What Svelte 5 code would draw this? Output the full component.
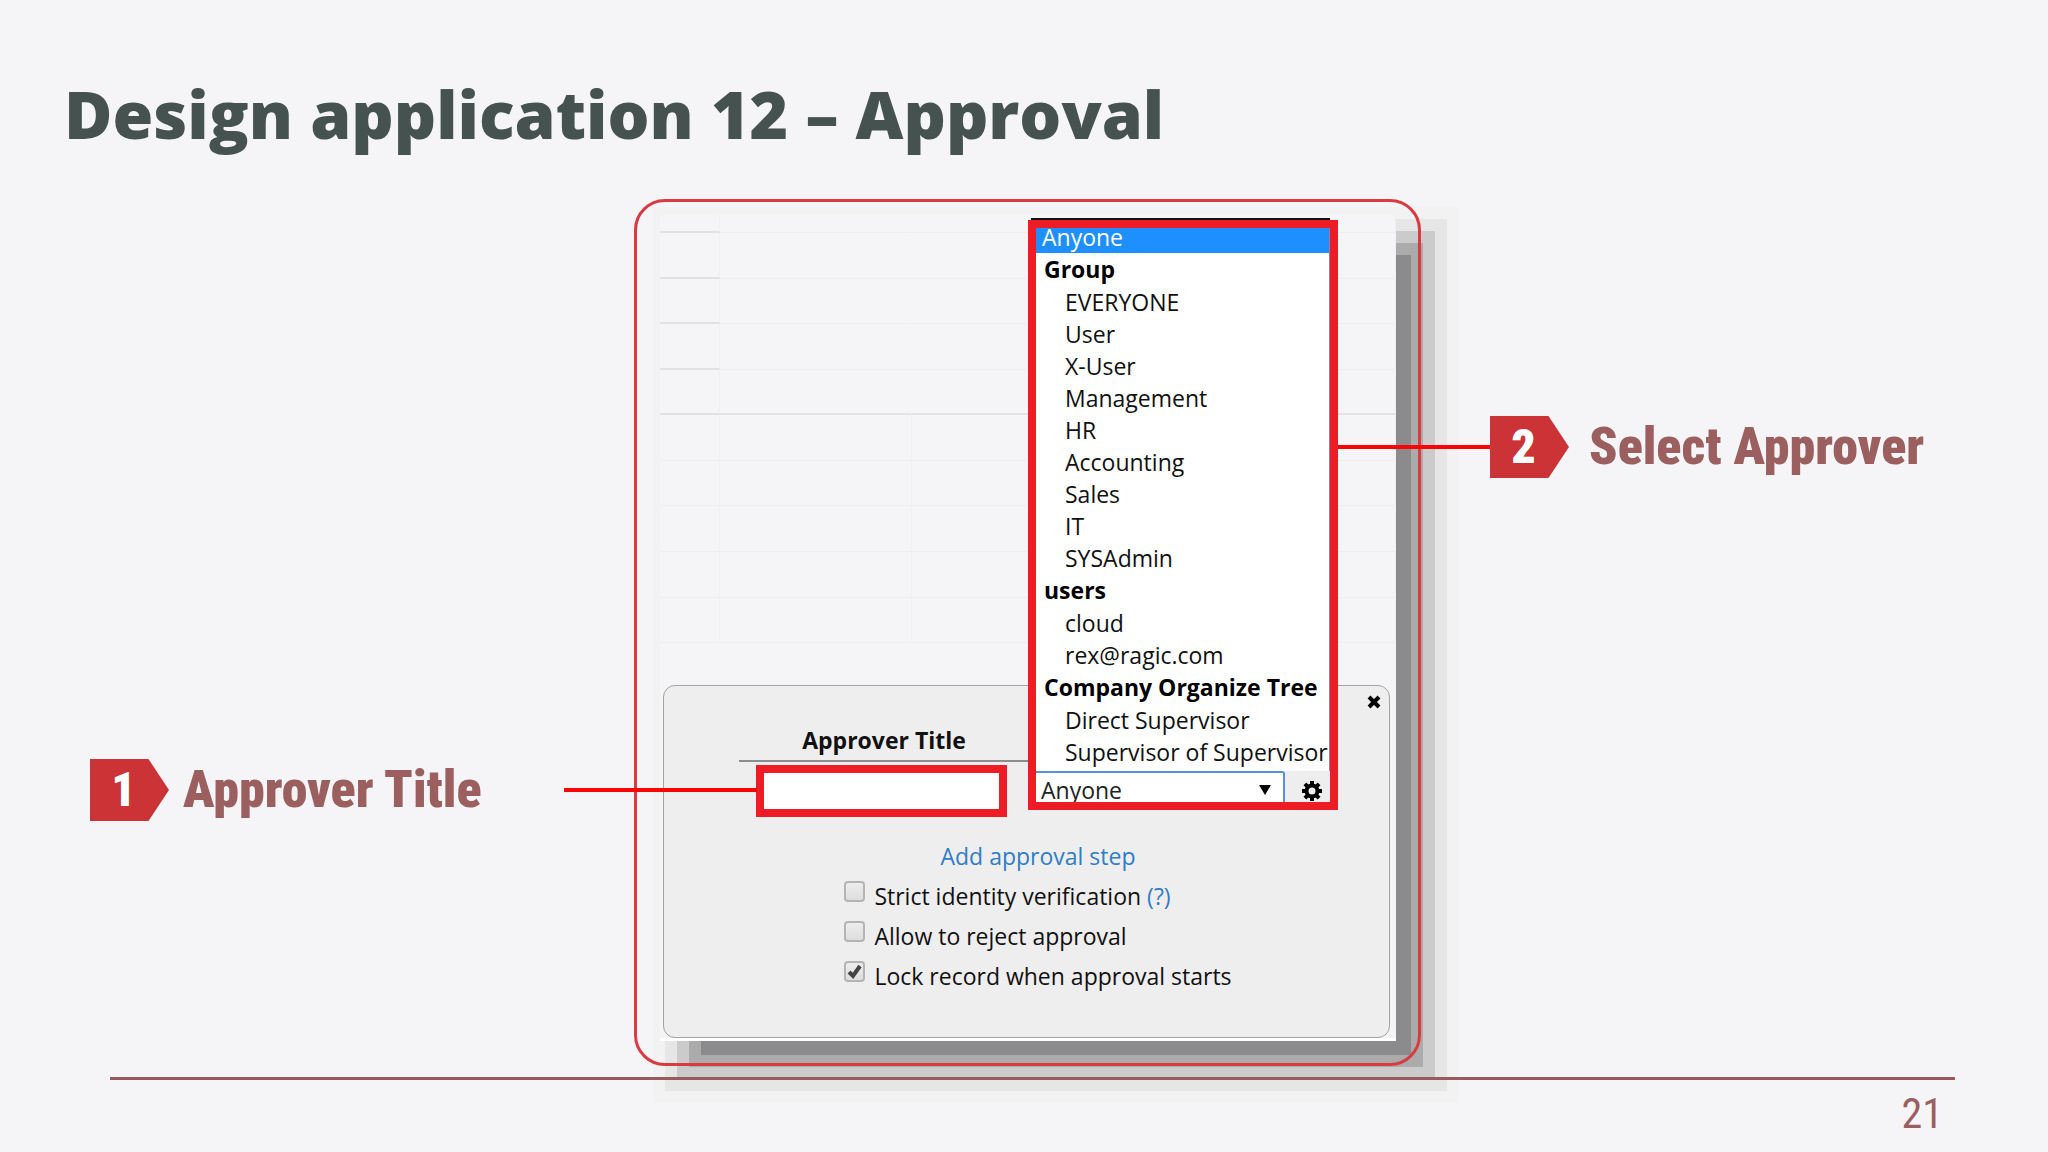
<script>
  const groups = [
    {
      name: "Group",
      members: ["EVERYONE", "User", "X-User", "Management", "HR", "Accounting", "Sales", "IT", "SYSAdmin"],
    },
    { name: "users", members: ["cloud", "rex@ragic.com"] },
    { name: "Company Organize Tree", members: ["Direct Supervisor", "Supervisor of Supervisor"] },
  ];

  const sheetRows = [1, 2, 3, 4, 5, 6, 7, 8, 9];

  let title = $state("");
  let approver = $state("Anyone");
  let strict = $state(false);
  let allowReject = $state(false);
  let lockRecord = $state(true);
</script>

<main class="slide">
  <h1 class="slide__title">Design application 12 – Approval</h1>

  <div class="stage">
    <div class="callout callout--left">
      <span class="callout__number">1</span>
      <span class="callout__text">Approver Title</span>
    </div>

    <section class="frame">
      <div class="shot">
        <div class="sheet">
          <div class="sheet__row sheet__row--first"><span></span><span></span><span></span></div>
          {#each sheetRows as row}
            <div class="sheet__row" class:sheet__row--head={row < 5} class:sheet__row--strong={row === 4}>
              <span></span><span></span><span></span>
            </div>
          {/each}
        </div>

        <div class="dialog">
          <button class="dialog__close" aria-label="Close">
            <svg viewBox="0 0 14 14" width="14" height="14">
              <path d="M2 2L12 12M12 2L2 12" stroke="#000" stroke-width="4" />
            </svg>
          </button>
          <div class="field">
            <label class="field__label" for="approver-title">Approver Title</label>
            <input class="field__input" id="approver-title" type="text" bind:value={title} />
          </div>
          <div class="options">
            <a class="options__add" href="#add">Add approval step</a>
            <div class="option">
              <input type="checkbox" id="strict" bind:checked={strict} />
              <label for="strict">Strict identity verification</label>
              <a href="#help">(?)</a>
            </div>
            <div class="option">
              <input type="checkbox" id="reject" bind:checked={allowReject} />
              <label for="reject">Allow to reject approval</label>
            </div>
            <div class="option">
              <input type="checkbox" id="lock" bind:checked={lockRecord} />
              <label for="lock">Lock record when approval starts</label>
            </div>
          </div>
        </div>

        <div class="picker">
          <ul class="picker__list">
            <li class="picker__selected">Anyone</li>
            {#each groups as group}
              <li class="picker__group">{group.name}</li>
              {#each group.members as member}
                <li class="picker__member">{member}</li>
              {/each}
            {/each}
          </ul>
          <div class="picker__bar">
            <select class="picker__select" aria-label="Approver" bind:value={approver}>
              <option>Anyone</option>
              {#each groups as group}
                <optgroup label={group.name}>
                  {#each group.members as member}
                    <option>{member}</option>
                  {/each}
                </optgroup>
              {/each}
            </select>
            <svg class="picker__arrow" viewBox="0 0 12 10" width="12" height="10">
              <path d="M0 0H12L6 10Z" />
            </svg>
            <button class="picker__gear" aria-label="Settings">
              <svg viewBox="0 0 20 20" width="20" height="20">
                <circle cx="10" cy="10" r="5.5" fill="none" stroke="#000" stroke-width="4" />
                <path
                  d="M10 0V4M10 16V20M0 10H4M16 10H20M2.9 2.9L5.7 5.7M14.3 14.3L17.1 17.1M17.1 2.9L14.3 5.7M5.7 14.3L2.9 17.1"
                  stroke="#000"
                  stroke-width="4"
                />
              </svg>
            </button>
          </div>
        </div>
      </div>
      <span class="connector connector--left"></span>
      <span class="connector connector--right"></span>
    </section>

    <div class="callout callout--right">
      <span class="callout__number">2</span>
      <span class="callout__text">Select Approver</span>
    </div>
  </div>

  <footer class="footer">21</footer>
</main>

<style>
  :global(body) {
    margin: 0;
    background: #f5f4f6;
  }

  .slide {
    min-height: 100vh;
    box-sizing: border-box;
    overflow: hidden;
    color: #111;
    font-family: "Open Sans", "Noto Sans", sans-serif;
    font-size: 23px;
    line-height: 32px;
  }

  .slide__title {
    margin: 0;
    padding: 67px 64px 40px;
    color: #46524f;
    font-size: 66px;
    font-weight: 900;
    line-height: 92px;
    white-space: nowrap;
  }

  .stage {
    display: grid;
    grid-template-columns: 1fr 787px 1fr;
    padding-left: 7px;
  }

  .callout {
    display: flex;
    align-items: center;
    align-self: start;
    color: #9c5f60;
    font-family: Impact, "Roboto Condensed", Roboto, sans-serif;
    font-size: 52px;
    font-weight: 900;
    line-height: 62px;
    white-space: nowrap;
  }

  .callout--left {
    gap: 14px;
    margin-top: 560px;
    padding-left: 83px;
  }

  .callout--right {
    gap: 20px;
    margin-top: 217px;
    padding-left: 69px;
  }

  .callout__number {
    width: 79px;
    box-sizing: border-box;
    padding-right: 12px;
    background: #cb3336;
    clip-path: polygon(0 0, 74% 0, 100% 50%, 74% 100%, 0 100%);
    color: #fff;
    font-size: 48px;
    text-align: center;
  }

  .frame {
    position: relative;
    padding: 16px 25px 25px 26px;
  }

  /* the outline runs over the shadow of the shot */
  .frame::after {
    position: absolute;
    inset: 0;
    border: 3px solid #d93c40;
    border-radius: 31px;
    pointer-events: none;
    content: "";
  }

  .shot {
    position: relative;
    background: #f5f4f6;
    box-shadow:
      28px 27px 0 -13px #8b8a8c,
      28px 27px 0 -1px #acabac,
      28px 27px 0 11px #cbcbcc,
      28px 27px 0 23px #e6e6e7,
      28px 27px 0 35px #f2f2f3;
  }

  .shot::after {
    display: block;
    height: 3px;
    background: #fff;
    content: "";
  }

  .sheet {
    display: flex;
    flex-direction: column;
    height: 470px;
    box-sizing: border-box;
    padding-bottom: 42px;
  }

  .sheet__row {
    display: grid;
    flex: 1;
    grid-template-columns: 60px 192px 1fr;
  }

  .sheet__row span {
    border-right: 1px solid #f0eff2;
    border-bottom: 1px solid #eeedef;
  }

  .sheet__row--first {
    flex: none;
    height: 18px;
  }

  .sheet__row--first span:nth-child(2),
  .sheet__row--head span:nth-child(2) {
    border-right-color: transparent;
  }

  .sheet__row--first span:first-child,
  .sheet__row--head span:first-child {
    border-bottom: 2px solid #e1e0e2;
  }

  .sheet__row--strong span {
    border-bottom: 2px solid #e3e2e4;
  }

  .dialog {
    position: relative;
    display: flex;
    flex-direction: column;
    margin: 0 6px 0 3px;
    padding-bottom: 41px;
    border: 1px solid #a3a3a4;
    border-radius: 12px;
    background: #efeeef;
  }

  .dialog__close {
    position: absolute;
    top: 9px;
    right: 8px;
    width: 14px;
    padding: 0;
    border: 0;
    background: none;
    line-height: 14px;
  }

  .field {
    display: flex;
    flex-direction: column;
    width: 290px;
    margin-left: 75px;
  }

  .field__label {
    padding: 38px 0 4px;
    border-bottom: 2px solid #8d8d8f;
    font-weight: 700;
    text-align: center;
  }

  .field__input {
    box-sizing: border-box;
    width: 251px;
    height: 52px;
    margin: 3px 0 0 17px;
    padding: 0 8px;
    border: 8px solid #ed1c27;
    background: #fff;
    font: inherit;
  }

  .options {
    display: flex;
    flex-direction: column;
    align-self: center;
    margin: 19px 0 0 23px;
    line-height: 40px;
  }

  .options a {
    color: #2f7dc9;
    text-decoration: none;
  }

  .options__add {
    align-self: center;
  }

  .option {
    display: flex;
    align-items: flex-start;
  }

  .option input {
    width: 21px;
    height: 21px;
    margin: 5px 9px 0 0;
    border: 2px solid #b4b4b4;
    border-radius: 4px;
    appearance: none;
    background: linear-gradient(#ededed, #dedede);
  }

  .option input:checked {
    background:
      url("data:image/svg+xml,%3Csvg xmlns='http://www.w3.org/2000/svg' viewBox='0 0 17 17'%3E%3Cpath d='M3 9L7 13L14 3' fill='none' stroke='%23444' stroke-width='4'/%3E%3C/svg%3E"),
      linear-gradient(#ededed, #dedede);
  }

  .option a {
    margin-left: 6px;
  }

  .picker {
    position: absolute;
    top: 5px;
    left: 368px;
    width: 294px;
    border: 8px solid #ed1c27;
    background: #fff;
  }

  .picker::before {
    position: absolute;
    top: -10px;
    right: 0;
    left: -5px;
    height: 2px;
    background: #111;
    content: "";
  }

  .picker__list {
    margin: 0;
    padding: 0 0 3px;
    border-right: 1px solid #8b7fae;
    list-style: none;
    white-space: nowrap;
  }

  .picker__selected {
    padding: 0 6px 7px;
    background: #1e8fff;
    color: #fff;
    line-height: 18px;
  }

  .picker__group {
    padding-left: 8px;
    color: #000;
    font-weight: 700;
    line-height: 33px;
  }

  .picker__member {
    padding-left: 29px;
  }

  .picker__bar {
    position: relative;
    display: flex;
    height: 31px;
    overflow: hidden;
    background: #efeeef;
  }

  .picker__select {
    flex: none;
    width: 249px;
    height: 38px;
    padding: 0 5px;
    border: 2px solid #5b8fd8;
    border-left: 0;
    border-radius: 0 3px 3px 0;
    appearance: none;
    background: #fff;
    color: #222;
    font: inherit;
  }

  .picker__arrow {
    position: absolute;
    top: 14px;
    left: 223px;
  }

  .picker__gear {
    width: 20px;
    height: 20px;
    margin: 10px 0 0 17px;
    padding: 0;
    border: 0;
    background: none;
    line-height: 20px;
  }

  .connector {
    position: absolute;
    z-index: 1;
    height: 4px;
    background: #fb0404;
  }

  .connector--left {
    top: 589px;
    left: -70px;
    width: 193px;
  }

  .connector--right {
    top: 246px;
    left: 704px;
    width: 152px;
  }

  .footer {
    position: relative;
    margin: 11px 93px 0 110px;
    padding: 10px 12px 0 0;
    border-top: 3px solid #985a5c;
    color: #9c5f60;
    font-family: "Roboto Condensed", "Liberation Sans", sans-serif;
    font-size: 42px;
    line-height: 48px;
    text-align: right;
  }
</style>
